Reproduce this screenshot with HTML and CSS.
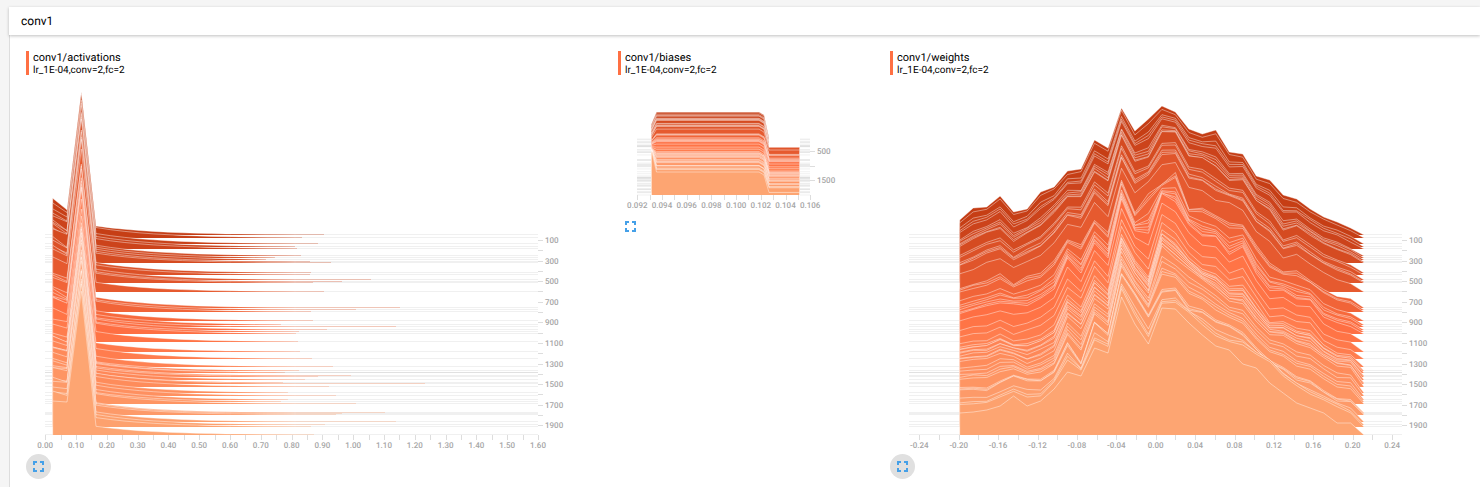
FILE: index.html
```html
<!DOCTYPE html>
<html lang="en">
<head>
<meta charset="utf-8">
<title>Histograms</title>
<link rel="stylesheet" href="styles.css">
</head>
<body>
<main class="category">
  <h1 class="category-name">conv1</h1>
  <div class="cards">
    <section class="card card-large">
      <header class="card-heading">
        <h2 class="tag">conv1/activations</h2>
        <p class="run">lr_1E-04,conv=2,fc=2</p>
      </header>
      <svg class="chart" id="activations" viewBox="0 0 576 379" role="img" aria-label="conv1/activations histogram"></svg>
      <button class="expand expand-active" type="button" aria-label="Collapse conv1/activations">
        <svg class="icon" viewBox="0 0 11 11"><path d="M1 4V1h3M7 1h3v3M10 7v3H7M4 10H1V7"/></svg>
      </button>
    </section>
    <section class="card card-small">
      <header class="card-heading">
        <h2 class="tag">conv1/biases</h2>
        <p class="run">lr_1E-04,conv=2,fc=2</p>
      </header>
      <svg class="chart" id="biases" viewBox="0 0 256 139" role="img" aria-label="conv1/biases histogram"></svg>
      <button class="expand" type="button" aria-label="Expand conv1/biases">
        <svg class="icon" viewBox="0 0 11 11"><path d="M1 4V1h3M7 1h3v3M10 7v3H7M4 10H1V7"/></svg>
      </button>
    </section>
    <section class="card card-large">
      <header class="card-heading">
        <h2 class="tag">conv1/weights</h2>
        <p class="run">lr_1E-04,conv=2,fc=2</p>
      </header>
      <svg class="chart" id="weights" viewBox="0 0 576 379" role="img" aria-label="conv1/weights histogram"></svg>
      <button class="expand expand-active" type="button" aria-label="Collapse conv1/weights">
        <svg class="icon" viewBox="0 0 11 11"><path d="M1 4V1h3M7 1h3v3M10 7v3H7M4 10H1V7"/></svg>
      </button>
    </section>
  </div>
</main>
<script src="charts.js"></script>
</body>
</html>
```
FILE: styles.css
```css
* { box-sizing: border-box; }

body {
  margin: 0;
  padding: 7px 0 0 9px;
  background: #f5f5f5;
  color: #000;
  font-family: Roboto, "Liberation Sans", sans-serif;
}

.category {
  display: flex;
  flex-direction: column;
  min-height: calc(100vh - 7px);
}

.category-name {
  margin: 0;
  padding: 0 12px;
  background: #fff;
  box-shadow: 0 1px 3px rgba(0, 0, 0, 0.25);
  font-size: 12px;
  font-weight: 400;
  line-height: 28px;
  text-rendering: geometricPrecision;
  z-index: 1;
}

.cards {
  display: flex;
  flex: 1;
  flex-wrap: wrap;
  align-items: flex-start;
  gap: 16px;
  padding: 16px 0 8px 16px;
  background: #fff;
  border-left: 1px solid #ddd;
}

.card {
  display: flex;
  flex-direction: column;
  align-items: flex-start;
  max-width: 100%;
}

.card-large { width: 576px; }
.card-small { width: 256px; }

.card-heading {
  height: 24px;
  padding-left: 4px;
  border-left: 3px solid #ff7043;
  text-rendering: geometricPrecision;
}

.tag,
.run {
  margin: 0;
  font-weight: 400;
  line-height: 13px;
}

.tag { font-size: 11px; }
.run { font-size: 10px; }

.chart {
  display: block;
  width: 100%;
  height: auto;
}

.ridge {
  stroke: #fff;
  stroke-opacity: 0.42;
  stroke-width: 1px;
}

.end {
  stroke-opacity: 0.3;
  stroke-width: 1px;
}

.base { stroke: #000; stroke-opacity: 0.06; }
.tick { stroke: #ddd; }

.label {
  fill: #a6a6a6;
  font-size: 8px;
  font-weight: 500;
  text-rendering: geometricPrecision;
}

.label-x { text-anchor: middle; }

.expand {
  display: flex;
  align-items: center;
  justify-content: center;
  width: 25px;
  height: 25px;
  padding: 0;
  border: 0;
  border-radius: 50%;
  background: transparent;
}

.expand-active { background: #e0e0e0; }

.icon {
  width: 11px;
  height: 11px;
  fill: none;
  stroke: #45a0e8;
  stroke-width: 2;
}
```
FILE: charts.js
```js
// Each run: [vertical offset of its baseline, x where the activations tail ends]
const runs = [
  [0, 298], [3, 276], [9, 292], [12, 269], [14, 271], [21, 275], [23, 249], [25, 240],
  [27, 284], [28, 305], [38, 285], [40, 284], [45, 345], [47, 316], [48, 287], [57, 298],
  [73, 374], [75, 330], [77, 285], [86, 287], [90, 255], [92, 370], [95, 301], [97, 273],
  [99, 270], [107, 272], [117, 274], [124, 286], [132, 307], [136, 273], [138, 259],
  [138, 250], [141, 325], [142, 292], [145, 279], [148, 257], [149, 399], [152, 303],
  [158, 262], [161, 310], [165, 262], [167, 255], [169, 330], [178, 359], [179, 316],
  [180, 310], [187, 370], [190, 299], [192, 285], [200, 288]
];

// Outline of the weights ridge at selected baselines
const weightKeys = [
  [234, [219,207,206,195,211,208,191,186,170,168,139,147,107,130,118,105,111,128,133,129,151,153,175,179,194,198,208,216,221,227,234]],
  [263, [246,239,232,228,241,233,226,212,197,197,172,181,135,161,158,132,132,156,158,167,181,180,201,210,230,226,235,244,249,255,263]],
  [291, [273,268,261,257,267,260,254,242,223,226,201,216,167,192,181,163,162,187,190,200,201,209,230,241,257,253,263,272,279,283,291]],
  [307, [287,283,280,273,283,275,272,260,239,244,219,232,180,212,193,183,172,208,207,215,222,224,245,262,271,270,279,288,295,298,307]],
  [333, [313,309,305,302,303,304,297,288,257,272,242,257,198,230,232,193,200,223,235,236,253,245,272,289,289,298,299,316,322,325,333]],
  [359, [337,333,333,327,335,330,325,315,287,298,267,283,227,253,270,223,233,253,265,267,280,277,297,317,315,322,323,340,347,349,359]],
  [386, [361,359,358,352,355,362,357,350,316,327,298,308,250,275,292,245,257,268,278,288,300,303,320,333,335,343,347,357,365,366,386]],
  [415, [390,389,390,383,376,380,381,372,345,365,323,335,275,295,317,293,291,310,313,323,327,335,350,363,370,380,383,393,401,402,415]],
  [425, [403,402,401,395,390,395,394,380,357,368,338,344,287,313,335,302,300,310,322,333,340,342,352,358,373,383,392,397,403,411,425]],
  [434, [412,411,409,405,395,405,400,388,371,375,347,352,296,323,343,307,308,322,334,345,349,363,367,382,392,402,407,412,422,422,434]]
].map(([base, tops]) => ({ offset: base - 234, heights: tops.map(y => base - y) }));

let seed = 7;
function noise(amount) {
  seed = (seed * 16807) % 2147483647;
  return (seed / 2147483647 - 0.5) * 2 * amount;
}

function mix(a, b, t) {
  return a.map((v, i) => Math.round(v + (b[i] - v) * t));
}

function runColor(offset) {
  const t = offset / 200;
  const rgb = t < 0.5
    ? mix([196, 60, 20], [255, 112, 67], t * 2)
    : mix([255, 112, 67], [253, 165, 114], t * 2 - 1);
  return `rgb(${rgb})`;
}

function add(parent, name, attrs, text) {
  const el = document.createElementNS("http://www.w3.org/2000/svg", name);
  for (const key in attrs) el.setAttribute(key, attrs[key]);
  if (text !== undefined) el.textContent = text;
  parent.appendChild(el);
}

function line(svg, cls, x1, y1, x2, y2) {
  add(svg, "line", { class: cls, x1, y1, x2, y2 });
}

function ridge(svg, points, y, color) {
  const top = points.map(([x, h]) => `${x.toFixed(1)},${(y - h).toFixed(1)}`).join("L");
  const first = points[0][0], last = points[points.length - 1][0];
  add(svg, "path", { class: "ridge", fill: color, d: `M${first},${y}L${top}L${last},${y}` });
}

function axisX(svg, left, step, count, y, labelFor) {
  for (let i = 0; i <= count; i++) {
    const x = left + i * step;
    const tick = Math.round(x) + 0.5;
    line(svg, "tick", tick, y, tick, y + 5);
    const text = labelFor(i);
    if (text) add(svg, "text", { class: "label label-x", x, y: y + 13 }, text);
  }
}

function axisY(svg, x, yFor, from, to, step, labelled) {
  for (let s = from; s <= to; s += step) {
    const y = Math.round(yFor(s)) + 0.5;
    line(svg, "tick", x, y, x + 5, y);
    if (labelled(s)) add(svg, "text", { class: "label", x: x + 7, y: yFor(s) + 3 }, s);
  }
}

function drawActivations() {
  const svg = document.getElementById("activations");
  runs.forEach(([offset, end]) => {
    const y = 160 + offset;
    const last = offset === 200;
    const color = runColor(offset);
    line(svg, "base", 19, y - 0.5, 27, y - 0.5);
    line(svg, "base", 180, y - 0.5, 512, y - 0.5);
    const start = last ? 8.7 : 10 + noise(1);
    const points = [
      [26.7, last ? 34 : 35 + noise(2)],
      [41, last ? 33 : 26 + offset / 30 + noise(2)],
      [55.3, 143.5 + noise(1)],
      [70, start]
    ];
    for (let x = 84.4; x < 220; x += 14.4) {
      points.push([x, start * Math.exp((70 - x) / 62)]);
    }
    points.push([Math.min(end, 270), 0]);
    ridge(svg, points, y, color);
    add(svg, "line", { class: "end", stroke: color, x1: 205, y1: y - 0.5, x2: end, y2: y - 0.5 });
  });
  axisX(svg, 19.2, 15.4, 32, 360, i => i % 2 ? "" : (i * 0.05).toFixed(2));
  axisY(svg, 512, s => 154.7 + s * 0.10294, 100, 1900, 100, s => s % 200 === 100);
}

function drawBiases() {
  const svg = document.getElementById("biases");
  runs.forEach(([offset]) => {
    const y = 64 + offset * 0.28;
    const t = offset / 200;
    line(svg, "base", 19, y, 33, y);
    line(svg, "base", 182, y, 192, y);
    const plateau = 27 - 4 * t;
    const points = [
      [33.5, 15 + 30 * t * t], [38.5, plateau], [141, plateau], [146, plateau - 3], [151, 1]
    ];
    if (offset > 46) {
      const h = offset === 200 ? 2.6 : 5;
      points[4][1] = h;
      points.push([181.5, h]);
    }
    ridge(svg, points, y, runColor(offset));
  });
  axisX(svg, 19.3, 12.35, 14, 120, i => i % 2 ? "" : (0.092 + i * 0.001).toFixed(3));
  axisY(svg, 192, s => 61.7 + s * 0.0289, 500, 1500, 500, s => s !== 1000);
}

function drawWeights() {
  const svg = document.getElementById("weights");
  runs.forEach(([offset]) => {
    const y = 160 + offset;
    const next = Math.max(1, weightKeys.findIndex(k => k.offset >= offset));
    const a = weightKeys[next - 1], b = weightKeys[next];
    const t = (offset - a.offset) / (b.offset - a.offset);
    line(svg, "base", 19, y - 0.5, 70, y - 0.5);
    line(svg, "base", 473, y - 0.5, 512, y - 0.5);
    const exact = offset === 0 || offset === 200;
    const points = a.heights.map((h, i) => {
      const jitter = exact || i === 30 ? 0 : noise(0.7);
      return [69.7 + i * 13.48, h + (b.heights[i] - h) * t + jitter];
    });
    ridge(svg, points, y, runColor(offset));
  });
  axisX(svg, 29.3, 19.7, 24, 360, i => i % 2 ? "" : ((i - 12) * 0.02).toFixed(2));
  axisY(svg, 512, s => 154.7 + s * 0.10294, 100, 1900, 100, s => s % 200 === 100);
}

drawActivations();
drawBiases();
drawWeights();
```
